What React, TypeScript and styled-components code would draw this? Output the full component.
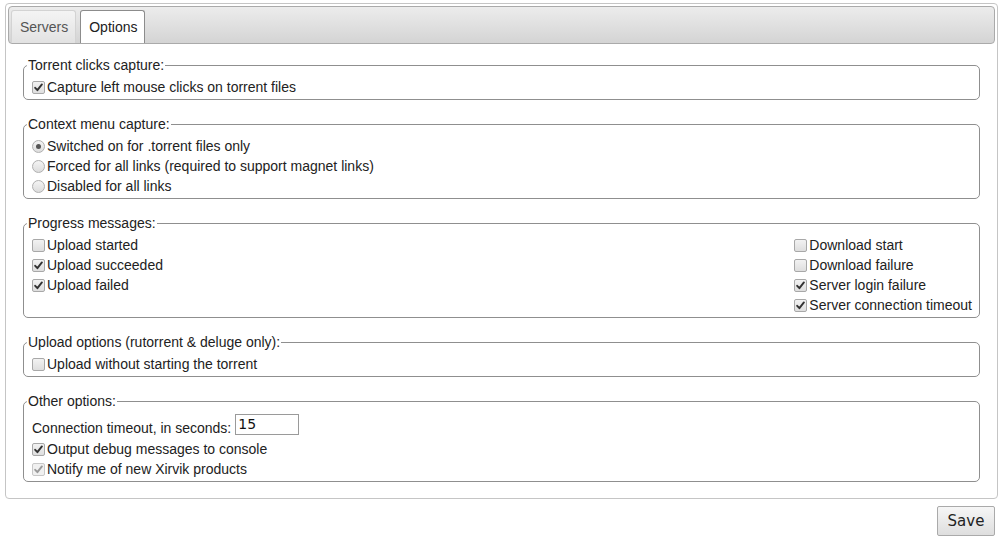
import React, { useState } from "react"
import styled, { createGlobalStyle } from "styled-components"

// ---------------------------------------------------------------- global

const GlobalStyle = createGlobalStyle`
	html, body {
		margin: 0;
		padding: 0;
		background: #ffffff;
	}
	body {
		font-family: "Liberation Sans", Arial, sans-serif;
		font-size: 14px;
		color: #222222;
	}
`

// ---------------------------------------------------------------- bits

function Check({ checked, disabled }: { checked?: boolean; disabled?: boolean }) {
	return (
		<Box $disabled={disabled}>
			{checked && (
				<svg width="9" height="9" viewBox="0 0 9 9">
					<path
						d="M1.2 4.8 L3.4 7.2 L7.9 1.4"
						fill="none"
						stroke={disabled ? "#9a9a9a" : "#333"}
						strokeWidth="1.9"
						strokeLinecap="round"
						strokeLinejoin="round"
					/>
				</svg>
			)}
		</Box>
	)
}

function Radio({ checked }: { checked?: boolean }) {
	return <Dot>{checked && <Inner />}</Dot>
}

function CheckRow({ label, checked, disabled }: { label: string; checked?: boolean; disabled?: boolean }) {
	return (
		<Row>
			<Check checked={checked} disabled={disabled} />
			{label}
		</Row>
	)
}

// ---------------------------------------------------------------- page

export default function App() {
	const [timeout, setTimeoutValue] = useState("15")
	return (
		<>
			<GlobalStyle />
			<Page>
				<Tabs>
					<TabBar>
						<Tab>Servers</Tab>
						<Tab $active>Options</Tab>
					</TabBar>
					<Panel>
						<Group>
							<Legend>Torrent clicks capture:</Legend>
							<CheckRow checked label="Capture left mouse clicks on torrent files" />
						</Group>

						<Group>
							<Legend>Context menu capture:</Legend>
							<Row>
								<Radio checked />
								Switched on for .torrent files only
							</Row>
							<Row>
								<Radio />
								Forced for all links (required to support magnet links)
							</Row>
							<Row>
								<Radio />
								Disabled for all links
							</Row>
						</Group>

						<Group>
							<Legend>Progress messages:</Legend>
							<Columns>
								<div>
									<CheckRow label="Upload started" />
									<CheckRow checked label="Upload succeeded" />
									<CheckRow checked label="Upload failed" />
								</div>
								<div>
									<CheckRow label="Download start" />
									<CheckRow label="Download failure" />
									<CheckRow checked label="Server login failure" />
									<CheckRow checked label="Server connection timeout" />
								</div>
							</Columns>
						</Group>

						<Group>
							<Legend>Upload options (rutorrent &amp; deluge only):</Legend>
							<CheckRow label="Upload without starting the torrent" />
						</Group>

						<Group>
							<Legend>Other options:</Legend>
							<InputRow>
								Connection timeout, in seconds:
								<NumberInput value={timeout} onChange={(e) => setTimeoutValue(e.target.value)} />
							</InputRow>
							<CheckRow checked label="Output debug messages to console" />
							<CheckRow checked disabled label="Notify me of new Xirvik products" />
						</Group>
					</Panel>
				</Tabs>
				<Footer>
					<SaveButton>Save</SaveButton>
				</Footer>
			</Page>
		</>
	)
}

// ---------------------------------------------------------------- styles

const Page = styled.div`
	padding: 3px 9px 0 5px;
	width: 1007px;
	box-sizing: border-box;
`

const Tabs = styled.div`
	border: 1px solid #c5c5c5;
	border-radius: 4px;
	padding: 2px;
`

const TabBar = styled.div`
	display: flex;
	gap: 4px;
	height: 33px;
	padding: 3px 2px 0;
	border: 1px solid #aaaaaa;
	border-radius: 4px;
	background: linear-gradient(#ececec, #d4d4d4);
`

const Tab = styled.div<{ $active?: boolean }>`
	display: flex;
	align-items: center;
	height: 33px;
	padding: 0 7px 0 8px;
	margin-bottom: -1px;
	box-sizing: border-box;
	border: 1px solid ${(p) => (p.$active ? "#8c8c8c" : "#d3d3d3")};
	border-bottom: none;
	border-radius: 3px 3px 0 0;
	background: ${(p) => (p.$active ? "#ffffff" : "linear-gradient(#f4f4f4, #e2e2e2)")};
	color: ${(p) => (p.$active ? "#212121" : "#555555")};
	font-size: 14px;
`

const Panel = styled.div`
	padding: 10px 15px 14px 15px;
`

const Group = styled.fieldset`
	margin: 0 0 13px;
	padding: 0 4px 2px 4px;
	border: 1px solid #8f8f8f;
	border-radius: 5px;
	&:last-child {
		margin-bottom: 0;
	}
`

const Legend = styled.legend`
	padding: 0 1px;
	margin: 0 0 1px -1px;
	line-height: 22px;
	font-size: 14px;
`

const Row = styled.div`
	display: flex;
	align-items: center;
	height: 20px;
	white-space: nowrap;
`

const Columns = styled.div`
	display: flex;
	justify-content: space-between;
	padding-right: 3px;
`

const Box = styled.span<{ $disabled?: boolean }>`
	display: inline-flex;
	align-items: center;
	justify-content: center;
	width: 11px;
	height: 11px;
	margin: 0 2px 0 4px;
	border: 1px solid ${(p) => (p.$disabled ? "#c8c8c8" : "#a8a8a8")};
	border-radius: 2px;
	background: ${(p) => (p.$disabled ? "#f0f0f0" : "linear-gradient(#f2f2f2, #dedede)")};
`

const Dot = styled.span`
	display: inline-flex;
	align-items: center;
	justify-content: center;
	width: 11px;
	height: 11px;
	margin: 0 2px 0 4px;
	border: 1px solid #b0b0b0;
	border-radius: 50%;
	background: linear-gradient(#f4f4f4, #dcdcdc);
`

const Inner = styled.span`
	width: 5px;
	height: 5px;
	border-radius: 50%;
	background: #555555;
`

const InputRow = styled.div`
	display: flex;
	align-items: center;
	gap: 4px;
	height: 23px;
	padding: 3px 0 0 4px;
	white-space: nowrap;
`

const NumberInput = styled.input`
	width: 64px;
	height: 21px;
	box-sizing: border-box;
	margin-top: -7px;
	padding: 0 2px;
	border: 1px solid #9a9a9a;
	border-radius: 0;
	font-family: "DejaVu Sans", sans-serif;
	font-size: 14px;
	color: #111111;
	outline: none;
`

const Footer = styled.div`
	display: flex;
	justify-content: flex-end;
	padding: 7px 3px 0 0;
`

const SaveButton = styled.button`
	width: 58px;
	height: 30px;
	border: 1px solid #aaaaaa;
	border-radius: 2px;
	background: linear-gradient(#f6f6f6, #dedede);
	font-family: "DejaVu Sans", sans-serif;
	font-size: 15px;
	color: #222222;
`
